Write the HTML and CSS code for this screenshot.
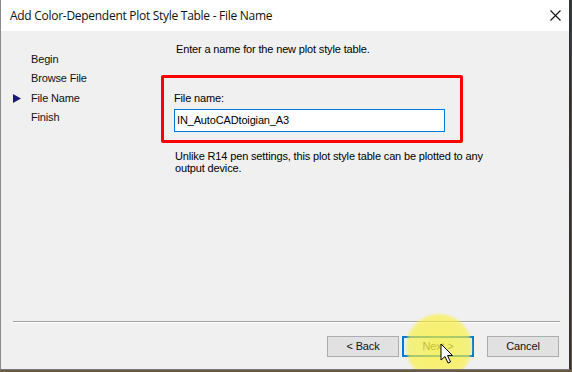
FILE: index.html
```html
<!DOCTYPE html>
<html>
<head>
<meta charset="utf-8">
<link rel="stylesheet" href="styles.css">
</head>
<body>
<div class="desk">
  <div class="window">
    <div class="titlebar">
      <span class="title">Add Color-Dependent Plot Style Table - File Name</span>
      <svg class="close" width="11" height="11" viewBox="0 0 11 11"><path d="M0.5 0.5L10.5 10.5M10.5 0.5L0.5 10.5" stroke="#111" stroke-width="1.1" fill="none"/></svg>
    </div>
    <div class="body">
      <div class="steps">
        <div class="step">Begin</div>
        <div class="step">Browse File</div>
        <div class="step current"><svg class="arrow" width="8" height="9" viewBox="0 0 8 9"><path d="M0 0L8 4.5L0 9Z" fill="#1a1a7a"/></svg>File Name</div>
        <div class="step">Finish</div>
      </div>
      <div class="main">
        <div class="intro">Enter a name for the new plot style table.</div>
        <div class="redbox">
          <div class="label">File name:</div>
          <div class="input">IN_AutoCADtoigian_A3</div>
        </div>
        <div class="note">Unlike R14 pen settings, this plot style table can be plotted to any output device.</div>
      </div>
    </div>
    <div class="footer">
      <div class="sep"></div>
      <div class="buttons">
        <div class="btn">&lt; Back</div>
        <div class="btn focus">Next &gt;</div>
        <div class="btn cancel">Cancel</div>
      </div>
    </div>
    <div class="highlight"></div>
    <svg class="cursor" width="14" height="22" viewBox="0 0 14 22"><path d="M1 1V17L5 13.5L8 20L10.5 19L7.5 12.5H12.5Z" fill="#fff" stroke="#000" stroke-width="1"/></svg>
  </div>
</div>
</body>
</html>
```
FILE: styles.css
```css
html, body {
  margin: 0;
  padding: 0;
}
body {
  width: 572px;
  height: 372px;
  overflow: hidden;
  background: #3a3228;
  font-family: "Liberation Sans", Arial, sans-serif;
  font-size: 11px;
  letter-spacing: -0.15px;
  color: #000;
}
.desk {
  width: 572px;
  height: 372px;
  background: linear-gradient(#3b3e44, #6a5a44);
}
.window {
  position: relative;
  width: 568px;
  height: 369px;
  border-left: 1px solid #8a8a8a;
  border-right: 2px solid #333;
  border-bottom: 1px solid #777;
  background: #f0f0f0;
  display: flex;
  flex-direction: column;
  overflow: hidden;
}
.titlebar {
  height: 31px;
  background: #fff;
  display: flex;
  align-items: center;
  justify-content: space-between;
  padding: 0 8px 0 9px;
  flex: none;
}
.title {
  font-family: "Open Sans", "Noto Sans", sans-serif;
  font-size: 12px;
  letter-spacing: -0.28px;
  color: #111;
  margin-top: -1px;
}
.body {
  display: flex;
  flex: 1;
}
.steps {
  width: 143px;
  padding: 19px 0 0 30px;
  box-sizing: border-box;
  flex: none;
}
.step {
  position: relative;
  height: 19.4px;
  line-height: 19.4px;
  color: #111;
}
.arrow {
  position: absolute;
  left: -18px;
  top: 5px;
}
.main {
  padding-top: 11px;
  padding-left: 17px;
  width: 302px;
  flex: none;
}
.intro {
  padding-left: 15px;
  line-height: 14px;
}
.redbox {
  margin-top: 19px;
  border: 3px solid #f00;
  border-radius: 2px;
  padding: 13px 15px 8px 10px;
}
.label {
  line-height: 14px;
}
.input {
  margin-top: 4px;
  height: 21px;
  border: 1px solid #0078d7;
  background: #fff;
  line-height: 21px;
  padding-left: 2px;
}
.note {
  padding-left: 14px;
  margin-top: 7px;
  line-height: 12px;
  width: 330px;
}
.footer {
  flex: none;
  height: 48px;
  padding: 0 9px 0 12px;
}
.sep {
  height: 0;
  border-top: 1px solid #a0a0a0;
  border-bottom: 1px solid #fff;
}
.buttons {
  display: flex;
  justify-content: flex-end;
  gap: 3px;
  margin-top: 13px;
  padding-right: 1px;
}
.btn {
  width: 70px;
  height: 19px;
  border: 1px solid #adadad;
  background: #e1e1e1;
  text-align: center;
  line-height: 19px;
  color: #111;
}
.btn.focus {
  border: 2px solid #0078d7;
  width: 68px;
  height: 17px;
  line-height: 17px;
  background: #e5f1fb;
  color: #444;
}
.btn.cancel {
  margin-left: 10px;
}
.highlight {
  position: absolute;
  left: 405px;
  top: 314px;
  width: 66px;
  height: 66px;
  border-radius: 50%;
  background: radial-gradient(circle, rgba(250, 240, 50, 0.72) 0%, rgba(250, 240, 60, 0.66) 60%, rgba(250, 242, 100, 0.5) 100%);
  filter: blur(1px);
}
.cursor {
  position: absolute;
  left: 439px;
  top: 343px;
}
```
